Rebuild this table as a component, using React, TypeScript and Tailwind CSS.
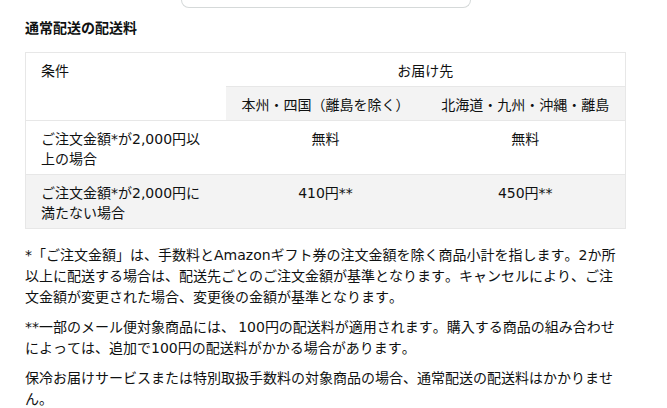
import type { ReactNode } from 'react';

const FONT = { fontFamily: '"Noto Sans CJK JP", "Noto Sans", sans-serif' };

const cell = 'px-[15px] pt-[7px] pb-[6px] leading-[20px] align-top';

// 英数字は Verdana 風の幅に寄せる
function L({ children }: { children: ReactNode }) {
  return <span className="font-['DejaVu_Sans'] leading-none">{children}</span>;
}

export default function App() {
  return (
    <div
      className="min-h-screen bg-white text-[#0f1111] [font-kerning:none] [text-spacing-trim:space-all] [font-feature-settings:'kern'_0,'chws'_0,'halt'_0]"
      style={FONT}
    >
      {/* 上部の検索ボックス（下端のみ表示） */}
      <div className="ml-[181px] w-[290px] h-[8px] border border-t-0 border-[#d5d9d9] rounded-b-[8px]" />

      <div className="px-[25px] pt-[9px]">
        <h3 className="text-[14px] font-bold leading-[21px]">通常配送の配送料</h3>

        <table className="mt-[14px] w-[600px] table-fixed border-collapse border border-[#e7e7e7] text-[14px]">
          <colgroup>
            <col className="w-[200px]" />
            <col className="w-[200px]" />
            <col className="w-[200px]" />
          </colgroup>
          <tbody>
            <tr>
              <td rowSpan={2} className={`${cell} pr-[20px]`}>条件</td>
              <td colSpan={2} className={`${cell} text-center`}>お届け先</td>
            </tr>
            <tr className="border-t border-[#e7e7e7]">
              <td className={`${cell} text-center bg-[#f3f3f3] whitespace-nowrap px-0`}>本州・四国（離島を除く）</td>
              <td className={`${cell} text-center bg-[#f3f3f3] whitespace-nowrap px-0`}>北海道・九州・沖縄・離島</td>
            </tr>
            <tr className="border-t border-[#e7e7e7]">
              <td className={`${cell} pr-[20px]`}>ご注文金額<L>*</L>が<L>2,000</L>円以上の場合</td>
              <td className={`${cell} text-center`}>無料</td>
              <td className={`${cell} text-center`}>無料</td>
            </tr>
            <tr className="border-t border-[#e7e7e7] bg-[#f3f3f3]">
              <td className={`${cell} pr-[20px]`}>ご注文金額<L>*</L>が<L>2,000</L>円に満たない場合</td>
              <td className={`${cell} text-center`}><L>410</L>円<L>**</L></td>
              <td className={`${cell} text-center`}><L>450</L>円<L>**</L></td>
            </tr>
          </tbody>
        </table>

        <div className="mt-[15px] w-[600px] text-[14px] leading-[21px] space-y-[9px]">
          <p><L>*</L>「ご注文金額」は、手数料と<L>Amazon</L>ギフト券の注文金額を除く商品小計を指します。<L>2</L>か所以上に配送する場合は、配送先ごとのご注文金額が基準となります。キャンセルにより、ご注文金額が変更された場合、変更後の金額が基準となります。</p>
          <p><L>**</L>一部のメール便対象商品には、 <L>100</L>円の配送料が適用されます。購入する商品の組み合わせによっては、追加で<L>100</L>円の配送料がかかる場合があります。</p>
          <p>保冷お届けサービスまたは特別取扱手数料の対象商品の場合、通常配送の配送料はかかりません。</p>
        </div>
      </div>
    </div>
  );
}
